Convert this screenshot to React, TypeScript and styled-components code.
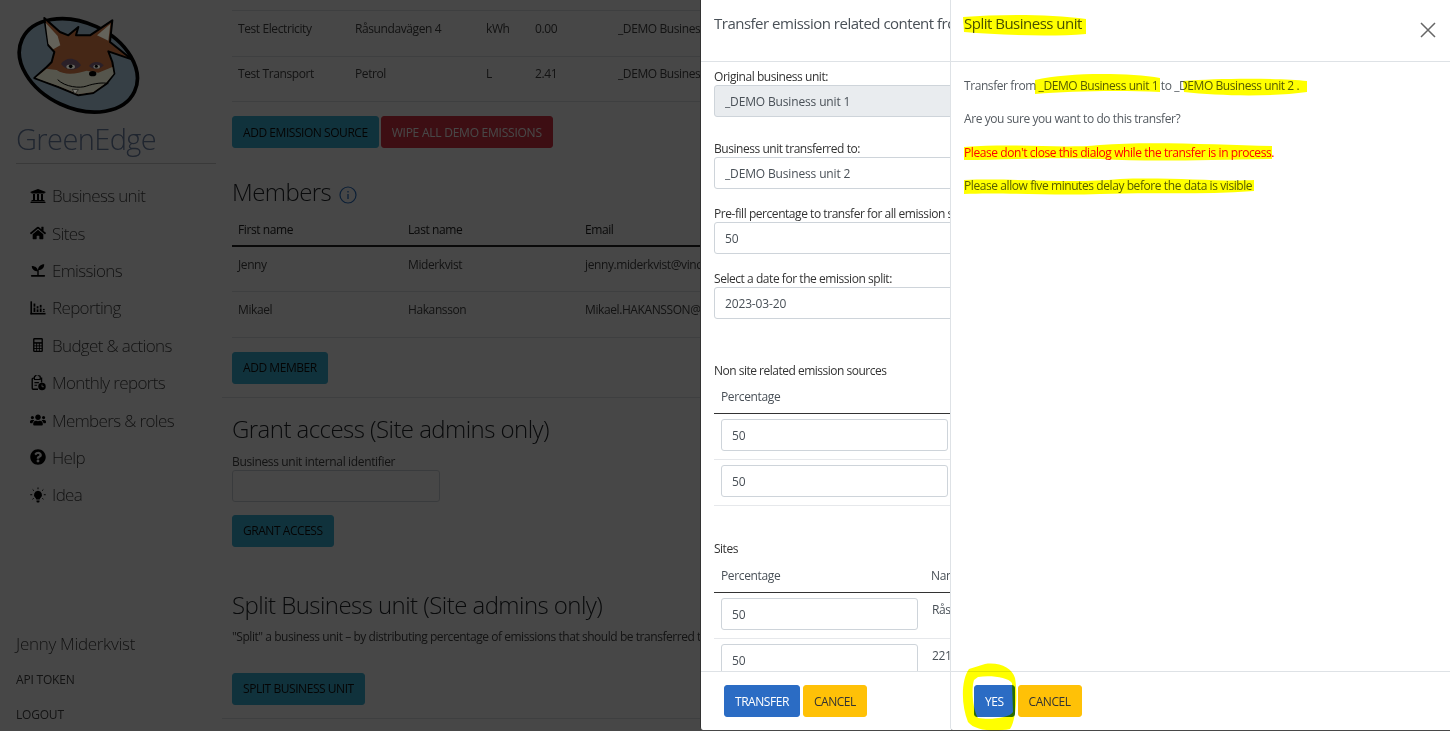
import React from 'react';
import styled, { createGlobalStyle } from 'styled-components';
import { FaUniversity, FaHome, FaUsers, FaQuestionCircle } from 'react-icons/fa';

const Global = createGlobalStyle`
  html, body { margin: 0; padding: 0; background: #fff; }
  body { font-family: "Open Sans", "Liberation Sans", sans-serif; color: #495057; overflow: hidden; }
  * { box-sizing: border-box; }
`;

type Mt = { $mt?: number };
const mt = (p: Mt) => (p.$mt !== undefined ? `margin-top: ${p.$mt}px;` : '');
const TEAL = '#3cb2d6';

const Page = styled.div`
  position: relative; width: 1450px; height: 731px; overflow: hidden; display: flex;
`;
const Sidebar = styled.aside`
  width: 222px; height: 731px; flex: none; display: flex; flex-direction: column; padding: 0 6px 0 16px;
`;
const LogoBox = styled.div`
  position: relative; z-index: 2; height: 120px; padding-top: 12px; margin-left: -1px;
  svg { display: block; }
`;
const Brand = styled.div`
  font-size: 29px; font-weight: 300; line-height: 37px; color: #6f84a8; height: 44px; letter-spacing: -0.6px;
  border-bottom: 1px solid #ccc;
`;
const Nav = styled.nav`display: flex; flex-direction: column; margin-top: 13px; padding-left: 13px; flex: 1;`;
const NavItem = styled.a`
  display: flex; align-items: center; height: 37.4px; font-size: 17px; font-weight: 300; color: #444; letter-spacing: -0.65px;
  svg { flex: none; width: 16px; height: 16px; margin: 0 6px 0 1px; color: #000; }
`;
const UserName = styled.div`font-size: 17px; font-weight: 300; color: #444; line-height: 24px; letter-spacing: -0.3px;`;
const SideLink = styled.div<Mt>`font-size: 12px; color: #444; line-height: 18px; letter-spacing: -0.2px; ${mt}`;
const SideFoot = styled.div`padding-bottom: 7px;`;

const Main = styled.main`flex: 1; min-width: 0; padding: 10px 0 0 0; font-size: 12px;`;
const Section = styled.section`padding-left: 10px; padding-right: 10px;`;
const Table = styled.table<Mt>`
  border-collapse: collapse; table-layout: fixed; width: 640px; letter-spacing: -0.4px; ${mt}
  td, th { padding: 0 6px; text-align: left; font-weight: 400; white-space: nowrap; overflow: hidden; }
  td { height: 45.5px; padding-top: 8.5px; vertical-align: top; border-top: 1px solid #dee2e6; color: #444; }
  th { height: 26px; padding-bottom: 6px; border-bottom: 2px solid #222; color: #222; font-weight: 500; }
  tr:last-child td { border-bottom: 1px solid #dee2e6; }
`;
const Row = styled.div<Mt>`display: flex; gap: 2px; margin-top: 14px; ${mt}`;
const Btn = styled.button<{ $tone: string; $fg?: string; $ls?: number }>`
  height: 32px; padding: 0 10px; border: 1px solid ${p => p.$tone}; background: ${p => p.$tone}; color: ${p => p.$fg || '#fff'};
  border-radius: 3px; font-family: inherit; font-size: 12px; letter-spacing: ${p => p.$ls ?? -0.45}px; white-space: nowrap;
`;
const H2 = styled.h2<Mt>`
  margin: 0; font-size: 24px; font-weight: 300; color: #212529; line-height: 32px; letter-spacing: -0.55px;
  display: flex; align-items: center; gap: 8px; ${mt}
  svg { margin-top: 5px; }
`;
const Divider = styled.hr<Mt>`margin: 0; border: 0; border-top: 1px solid #dee2e6; ${mt}`;
const SmallLabel = styled.div<Mt>`font-size: 12px; color: #444; line-height: 16px; letter-spacing: -0.35px; ${mt}`;
const Input = styled.div<{ $w?: number; $off?: boolean } & Mt>`
  height: 32px; width: ${p => (p.$w ? `${p.$w}px` : '100%')}; padding: 0 10px; display: flex; align-items: center;
  border: 1px solid #ced4da; border-radius: 3px; font-size: 12px; color: #495057; letter-spacing: -0.15px;
  background: ${p => (p.$off ? '#e9ecef' : '#fff')}; flex: none; ${mt}
`;
const Para = styled.p<Mt>`margin: 0; white-space: nowrap; color: #444; line-height: 16px; letter-spacing: -0.45px; ${mt}`;

const Backdrop = styled.div`position: absolute; inset: 0; z-index: 1; background: rgba(0,0,0,.72);`;
const Panel = styled.div<{ $left: number; $w: number; $edge: string }>`
  position: absolute; z-index: 3; top: 0; left: ${p => p.$left}px; width: ${p => p.$w}px; height: 730px; background: #fff;
  display: flex; flex-direction: column; overflow: hidden; border-left: 1px solid ${p => p.$edge}; border-bottom-left-radius: 3px;
`;
const Head = styled.div`
  height: 62px; flex: none; border-bottom: 1px solid #dee2e6; padding: 13px 13px 0; font-size: 15px; line-height: 21px; color: #495057;
  white-space: nowrap; letter-spacing: -0.5px; display: flex; justify-content: space-between; font-weight: 400;
`;
const Close = styled.div`
  width: 16px; height: 16px; margin: 9px 1px 0 0; color: #666; svg { display: block; }
`;
const Body = styled.div`flex: 1; min-height: 0; overflow: hidden; padding: 0 0 0 13px; font-size: 12px;`;
const Foot = styled.div`
  height: 59px; flex: none; border-top: 1px solid #dee2e6; display: flex; align-items: flex-start; gap: 3px; padding: 13px 0 0 23px;
`;
const FormLabel = styled.div`font-size: 12px; font-weight: 500; color: #333; line-height: 16px; white-space: nowrap; letter-spacing: -0.45px;`;
const Field = styled.div<Mt>`width: 320px; ${mt}`;
const SubHead = styled.div<Mt>`font-size: 12px; font-weight: 500; color: #333; line-height: 16px; white-space: nowrap; letter-spacing: -0.5px; ${mt}`;
const PctHead = styled.div<Mt>`
  height: 34px; width: 320px; display: flex; align-items: center; border-bottom: 1px solid #333; padding-left: 7px; color: #495057; letter-spacing: -0.35px; margin-top: 1px; ${mt}
`;
const PctCol = styled.div<{ $w: number }>`width: ${p => p.$w}px; flex: none;`;
const PctRow = styled.div`
  height: 46px; width: 320px; display: flex; align-items: flex-start; padding: 5px 0 0 7px; border-bottom: 1px solid #e6e8eb; color: #495057; letter-spacing: -0.35px;
`;
const Cell = styled.div`padding: 3px 0 0 14px; white-space: nowrap;`;
const Copy = styled.div`padding: 16px 0 0 0; line-height: 16px; letter-spacing: -0.42px; color: #495057;`;
const Line = styled.p<{ $red?: boolean }>`margin: 0 0 17.4px; white-space: pre; color: ${p => (p.$red ? '#f00' : '#555b61')};`;
const Marks = styled.svg`position: absolute; z-index: 4; left: 0; top: 0; pointer-events: none; mix-blend-mode: multiply;`;

const IconSeed = () => (
  <svg viewBox="0 0 18 18" fill="currentColor"><rect x="1" y="14.500" width="16" height="2" rx="1"/><path d="M8.200 9h1.600v6H8.200z"/><path d="M9 10.500C9 7 6 4.500 2 4.500 2 8 4.500 10.500 9 10.500Z"/><path d="M9 9C9 5.500 12 2.500 16 2.500 16 6.500 13.500 9 9 9Z"/></svg>
);
const IconCalc = () => (
  <svg viewBox="0 0 18 18"><rect x="3.500" y="1" width="11" height="16" rx="1.500" fill="currentColor"/><rect x="5" y="2.800" width="8" height="3" fill="#fff"/><g fill="#fff"><rect x="5" y="7.500" width="2" height="2"/><rect x="8" y="7.500" width="2" height="2"/><rect x="11" y="7.500" width="2" height="2"/><rect x="5" y="10.500" width="2" height="2"/><rect x="8" y="10.500" width="2" height="2"/><rect x="11" y="10.500" width="2" height="2"/><rect x="5" y="13.500" width="2" height="2"/><rect x="8" y="13.500" width="2" height="2"/><rect x="11" y="13.500" width="2" height="2"/></g></svg>
);
const IconReport = () => (
  <svg viewBox="0 0 18 18"><g fill="currentColor"><rect x="0.500" y="1.500" width="1.800" height="14.500"/><rect x="0.500" y="14.500" width="17" height="1.800"/><rect x="4" y="4" width="2" height="3.500"/><rect x="4" y="8.500" width="2" height="5"/><rect x="7.500" y="7" width="2" height="2.500"/><rect x="7.500" y="10.500" width="2" height="3"/><rect x="11" y="5.500" width="2" height="3"/><rect x="11" y="9.500" width="2" height="4"/><rect x="14.500" y="10" width="2" height="1.500"/><rect x="14.500" y="12.500" width="2" height="1"/></g></svg>
);
const IconMonthly = () => (
  <svg viewBox="0 0 18 18"><path d="M3 3.500h2.500M11 3.500h2v5M9 16H3.500a1 1 0 0 1-1-1V4.500a1 1 0 0 1 1-1" fill="none" stroke="currentColor" strokeWidth="1.500"/><path d="M6 1.500a2.300 2.300 0 0 1 4.500 0H11.500V5H5V1.500Z" fill="none" stroke="currentColor" strokeWidth="1.200"/><path d="M5 8.500h5M5 11.500h3" stroke="currentColor" strokeWidth="1.300"/><circle cx="13.500" cy="13" r="4.200" fill="currentColor"/><path d="M13.500 10.800V13.200H15.600" fill="none" stroke="#fff" strokeWidth="1"/></svg>
);
const IconIdea = () => (
  <svg viewBox="0 0 18 18"><path d="M9 4.200a4.600 4.600 0 0 0-3 8c.8.8 1 1.300 1 2h4c0-.7.2-1.200 1-2a4.600 4.600 0 0 0-3-8Z" fill="currentColor"/><path d="M7.300 15.200h3.400v1.100a1 1 0 0 1-1 1h-1.400a1 1 0 0 1-1-1Z" fill="currentColor"/><path d="M9 0.500v2M3 2.800l1.400 1.400M15 2.800l-1.400 1.400M0.300 8.700h2.200M15.500 8.700h2.200M2.800 13.800l1.400-1M15.200 13.800l-1.400-1" stroke="currentColor" strokeWidth="1.100" fill="none"/></svg>
);
const InfoIcon = () => (
  <svg width="18" height="18" viewBox="0 0 18 18" fill="none" stroke="#2a6fc0" strokeWidth="1.200"><circle cx="9" cy="9" r="8"/><path d="M9 8v5M9 5v1.500" strokeWidth="1.300"/></svg>
);

const FoxLogo = () => (
  <svg width="128" height="108" viewBox="0 0 384 324">
    <ellipse cx="190" cy="160" rx="186" ry="128" transform="rotate(25 190 160)" fill="#363f45" stroke="#000" strokeWidth="11"/>
    <path d="M88 18 L135 60 L160 70 L190 45 L183 70 L225 70 L292 25 L285 90 L350 142 L280 118 L292 150 L298 185 L275 215 L235 243 L190 250 L130 225 L90 210 L58 198 L95 165 L110 150 L118 120 L100 100 Z" fill="#452716" stroke="#000" strokeWidth="6" strokeLinejoin="round"/>
    <path d="M92 32 L128 72 L136 100 L115 112 L100 95 Z" fill="#64625a"/>
    <path d="M286 36 L280 86 L246 70 Z" fill="#64625a"/>
    <path d="M62 197 L95 170 L125 174 C150 192 190 184 215 176 L250 182 L292 165 L296 185 L273 213 L235 240 L190 247 L130 222 L90 208 Z" fill="#55554c"/>
    <path d="M138 156 C150 136 182 132 198 160 C182 178 155 178 138 156 Z" fill="#2a2028"/>
    <ellipse cx="167" cy="164" rx="13" ry="6.500" fill="#66665f"/>
    <circle cx="167" cy="163" r="5.500" fill="#000"/>
    <path d="M222 162 C232 146 256 146 266 160 C256 174 234 174 222 162 Z" fill="#2a2028"/>
    <ellipse cx="245" cy="164" rx="10" ry="5.500" fill="#66665f"/>
    <circle cx="244" cy="163" r="4.500" fill="#000"/>
    <ellipse cx="233" cy="185" rx="11" ry="8" fill="#000"/>
    <path d="M128 203 C150 225 195 230 215 222 C235 215 265 210 280 215" fill="none" stroke="#000" strokeWidth="3"/>
    <path d="M172 232 L190 233 L180 246 Z" fill="#7a7a74" stroke="#000" strokeWidth="1.500"/>
  </svg>
);

const nav: [React.ReactNode, string][] = [
  [<FaUniversity />, 'Business unit'], [<FaHome />, 'Sites'], [<IconSeed />, 'Emissions'],
  [<IconReport />, 'Reporting'], [<IconCalc />, 'Budget & actions'], [<IconMonthly />, 'Monthly reports'],
  [<FaUsers />, 'Members & roles'], [<FaQuestionCircle />, 'Help'], [<IconIdea />, 'Idea'],
];

export default function App() {
  return (
    <Page>
      <Global />
      <Sidebar>
        <LogoBox><FoxLogo /></LogoBox>
        <Brand>GreenEdge</Brand>
        <Nav>{nav.map(([icon, label]) => <NavItem key={label}>{icon}{label}</NavItem>)}</Nav>
        <SideFoot>
          <UserName>Jenny Miderkvist</UserName>
          <SideLink $mt={15}>API TOKEN</SideLink>
          <SideLink $mt={17}>LOGOUT</SideLink>
        </SideFoot>
      </Sidebar>
      <Main>
        <Section>
          <Table>
            <colgroup><col width="117" /><col width="131" /><col width="49" /><col width="83" /><col width="260" /></colgroup>
            <tbody>
              <tr><td>Test Electricity</td><td>Råsundavägen 4</td><td>kWh</td><td>0.00</td><td>_DEMO Business unit 1</td></tr>
              <tr><td>Test Transport</td><td>Petrol</td><td>L</td><td>2.41</td><td>_DEMO Business unit 1</td></tr>
            </tbody>
          </Table>
          <Row>
            <Btn $tone={TEAL} $fg="#111">ADD EMISSION SOURCE</Btn>
            <Btn $tone="#dc3545" $ls={-0.24}>WIPE ALL DEMO EMISSIONS</Btn>
          </Row>
          <H2 $mt={28}>Members <InfoIcon /></H2>
          <Table $mt={12}>
            <colgroup><col width="170" /><col width="177" /><col width="293" /></colgroup>
            <thead><tr><th>First name</th><th>Last name</th><th>Email</th></tr></thead>
            <tbody>
              <tr><td>Jenny</td><td>Miderkvist</td><td>jenny.miderkvist@vincit.com</td></tr>
              <tr><td>Mikael</td><td>Hakansson</td><td>Mikael.HAKANSSON@vincit.com</td></tr>
            </tbody>
          </Table>
          <Row><Btn $tone={TEAL} $fg="#111">ADD MEMBER</Btn></Row>
        </Section>
        <Divider $mt={13} />
        <Section>
          <H2 $mt={15}>Grant access (Site admins only)</H2>
          <SmallLabel $mt={9}>Business unit internal identifier</SmallLabel>
          <Input $w={208} $mt={0} />
          <Row $mt={13}><Btn $tone={TEAL} $fg="#111">GRANT ACCESS</Btn></Row>
          <H2 $mt={42}>Split Business unit (Site admins only)</H2>
          <Para $mt={8}>"Split" a business unit – by distributing percentage of emissions that should be transferred to another business unit</Para>
          <Row $mt={28}><Btn $tone={TEAL} $fg="#111">SPLIT BUSINESS UNIT</Btn></Row>
        </Section>
        <Divider $mt={13} />
      </Main>
      <Backdrop />
      <Panel $left={700} $w={251} $edge="#333">
        <Head>Transfer emission related content from</Head>
        <Body>
          <Field $mt={7}><FormLabel>Original business unit:</FormLabel><Input $off>_DEMO Business unit 1</Input></Field>
          <Field $mt={24}><FormLabel>Business unit transferred to:</FormLabel><Input>_DEMO Business unit 2</Input></Field>
          <Field $mt={17}><FormLabel>Pre-fill percentage to transfer for all emission sources</FormLabel><Input>50</Input></Field>
          <Field $mt={17}><FormLabel>Select a date for the emission split:</FormLabel><Input>2023-03-20</Input></Field>
          <SubHead $mt={44}>Non site related emission sources</SubHead>
          <PctHead>Percentage</PctHead>
          <PctRow><Input $w={227}>50</Input></PctRow>
          <PctRow><Input $w={227}>50</Input></PctRow>
          <SubHead $mt={35}>Sites</SubHead>
          <PctHead $mt={2}><PctCol $w={210}>Percentage</PctCol>Name</PctHead>
          <PctRow><Input $w={197}>50</Input><Cell>Råsundavägen</Cell></PctRow>
          <PctRow><Input $w={197}>50</Input><Cell>221</Cell></PctRow>
        </Body>
        <Foot>
          <Btn $tone="#2b6cc4">TRANSFER</Btn>
          <Btn $tone="#ffc107" $fg="#333">CANCEL</Btn>
        </Foot>
      </Panel>
      <Panel $left={950} $w={500} $edge="#dee2e6">
        <Head>Split Business unit
          <Close><svg width="16" height="16" viewBox="0 0 16 16" fill="none" stroke="currentColor" strokeWidth="1.500"><path d="M1 1l14 14M15 1L1 15"/></svg></Close>
        </Head>
        <Body>
          <Copy>
            <Line>Transfer from _DEMO Business unit 1 to _DEMO Business unit 2 .</Line>
            <Line>Are you sure you want to do this transfer?</Line>
            <Line $red>Please don't close this dialog while the transfer is in process.</Line>
            <Line>Please allow five minutes delay before the data is visible</Line>
          </Copy>
        </Body>
        <Foot>
          <Btn $tone="#2b6cc4">YES</Btn>
          <Btn $tone="#ffc107" $fg="#333">CANCEL</Btn>
        </Foot>
      </Panel>
      <Marks width="1450" height="731" viewBox="0 0 1450 731">
        <g fill="#ffff00">
          <path d="M963 17 C1000 14 1050 14 1086 19 L1086 34 C1050 37 1000 35 964 32Z"/>
          <path d="M1035 80 C1070 72 1130 73 1160 78 L1160 92 C1120 90 1070 91 1035 94Z"/>
          <path d="M1183 81 C1220 78 1280 78 1307 81 L1307 92 C1270 97 1220 96 1184 92Z"/>
          <path d="M964 147 C1020 143 1060 149 1100 145 C1150 141 1220 145 1272 146 L1272 159 C1200 160 1150 162 1100 159 C1050 157 1000 160 964 160Z"/>
          <path d="M964 180 C1020 178 1070 184 1120 179 C1170 177 1220 182 1254 180 L1254 191 C1200 195 1150 192 1100 194 C1050 196 1000 192 964 194Z"/>
          <path fillRule="evenodd" d="M985 664 C1000 662 1012 668 1015 678 C1018 695 1016 720 1010 729 C995 732 975 731 968 722 C961 705 961 680 969 669 Z M978 677 C990 675 1008 677 1012 683 L1013 712 C1010 718 990 720 978 718 C973 710 971 690 974 680Z"/>
        </g>
      </Marks>
    </Page>
  );
}
